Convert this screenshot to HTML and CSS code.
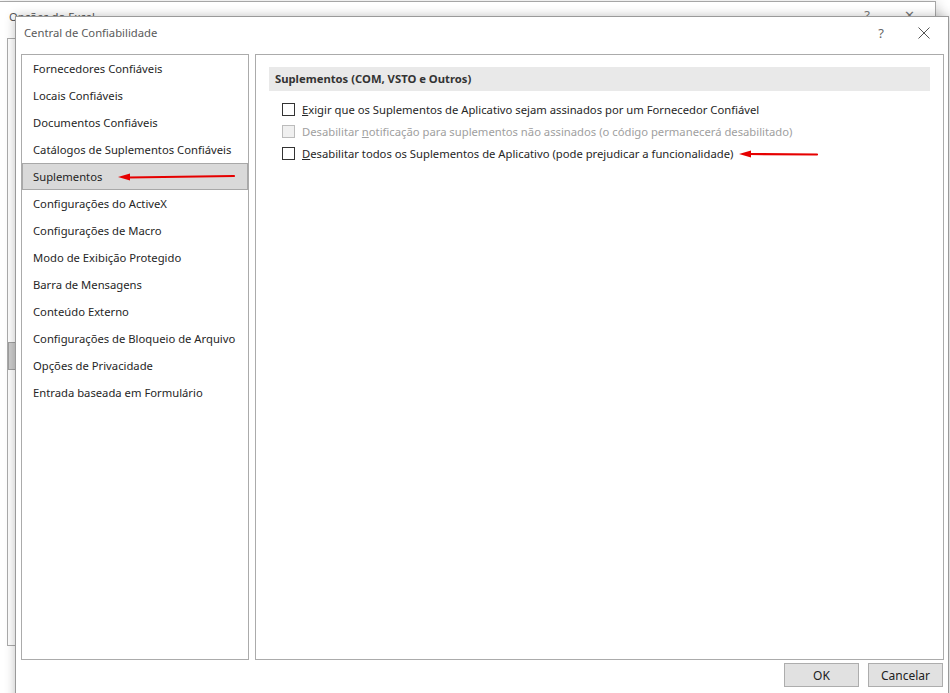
FILE: index.html
```html
<!DOCTYPE html>
<html lang="pt-BR">
<head>
  <meta charset="UTF-8" />
  <title>Central de Confiabilidade</title>
  <link rel="stylesheet" href="styles.css">
</head>
<body>
  <!-- Background window (Opções do Excel) -->
  <div class="bg-window">
    <div class="bg-title">Opções do Excel</div>
    <div class="bg-controls"><span>?</span><span>✕</span></div>
    <div class="bg-list">
      <div class="bg-thumb"></div>
    </div>
  </div>

  <!-- Trust Center dialog -->
  <div class="dialog">
    <div class="titlebar">
      <span class="title">Central de Confiabilidade</span>
      <span class="help">?</span>
      <svg class="close" width="12" height="12" viewBox="0 0 12 12">
        <path d="M0.5 0.5 L11.5 11.5 M11.5 0.5 L0.5 11.5" stroke="#555" stroke-width="1" fill="none"/>
      </svg>
    </div>

    <div class="content">
      <ul class="nav">
        <li>Fornecedores Confiáveis</li>
        <li>Locais Confiáveis</li>
        <li>Documentos Confiáveis</li>
        <li>Catálogos de Suplementos Confiáveis</li>
        <li class="selected">Suplementos</li>
        <li>Configurações do ActiveX</li>
        <li>Configurações de Macro</li>
        <li>Modo de Exibição Protegido</li>
        <li>Barra de Mensagens</li>
        <li>Conteúdo Externo</li>
        <li>Configurações de Bloqueio de Arquivo</li>
        <li>Opções de Privacidade</li>
        <li>Entrada baseada em Formulário</li>
      </ul>

      <div class="pane">
        <div class="section-head">Suplementos (COM, VSTO e Outros)</div>
        <label class="check"><span class="box"></span><span><u>E</u>xigir que os Suplementos de Aplicativo sejam assinados por um Fornecedor Confiável</span></label>
        <label class="check disabled"><span class="box"></span><span>Desabilitar <u>n</u>otificação para suplementos não assinados (o código permanecerá desabilitado)</span></label>
        <label class="check"><span class="box"></span><span><u>D</u>esabilitar todos os Suplementos de Aplicativo (pode prejudicar a funcionalidade)</span></label>
      </div>
    </div>

    <div class="buttons">
      <button class="btn">OK</button>
      <button class="btn">Cancelar</button>
    </div>

    <svg class="grip" width="8" height="8" viewBox="0 0 8 8">
      <rect x="6" y="0" width="1" height="1" fill="#bbb"/>
      <rect x="3" y="3" width="1" height="1" fill="#bbb"/>
      <rect x="6" y="3" width="1" height="1" fill="#bbb"/>
      <rect x="0" y="6" width="1" height="1" fill="#bbb"/>
      <rect x="3" y="6" width="1" height="1" fill="#bbb"/>
      <rect x="6" y="6" width="1" height="1" fill="#bbb"/>
    </svg>
  </div>

  <!-- red annotation arrows -->
  <svg class="arrow arrow-nav" width="120" height="10" viewBox="0 0 120 10">
    <path d="M0 5 L12 1.5 L12 8.5 Z" fill="#e60000"/>
    <path d="M10 5.5 L116 4" stroke="#e60000" stroke-width="2.2" stroke-linecap="round"/>
  </svg>
  <svg class="arrow arrow-opt" width="82" height="10" viewBox="0 0 82 10">
    <path d="M0 5 L12 1.5 L12 8.5 Z" fill="#e60000"/>
    <path d="M10 5 L78 5.5" stroke="#e60000" stroke-width="2.2" stroke-linecap="round"/>
  </svg>
</body>
</html>
```

FILE: styles.css
```css
html, body {
  margin: 0;
  height: 100%;
  overflow: hidden;
}

body {
  position: relative;
  background: #fff;
  font-family: 'Noto Sans', 'Segoe UI', sans-serif;
  font-size: 11.25px;
  color: #262626;
}

/* window behind */
.bg-window {
  position: absolute;
  left: -2px;
  top: 1px;
  width: 936px;
  height: 720px;
  background: #fff;
  border: 1px solid #a6a6a6;
  box-shadow: 2px 2px 12px rgba(0, 0, 0, 0.18);
}

.bg-title {
  position: absolute;
  left: 10px;
  top: 7px;
  color: #555;
}

.bg-controls {
  position: absolute;
  right: 20px;
  top: 4px;
  display: flex;
  gap: 34px;
  color: #777;
  font-size: 13px;
}

.bg-list {
  position: absolute;
  left: 8px;
  top: 36px;
  width: 40px;
  height: 606px;
  border: 1px solid #ababab;
}

.bg-thumb {
  position: absolute;
  left: 0;
  top: 303px;
  width: 7px;
  height: 26px;
  background: #cdcdcd;
  border: 1px solid #a0a0a0;
}

/* dialog */
.dialog {
  position: absolute;
  left: 15px;
  top: 16px;
  width: 932px;
  height: 690px;
  background: #fff;
  border: 1px solid #9a9a9a;
  box-shadow: 0 0 10px rgba(0, 0, 0, 0.25);
  display: flex;
  flex-direction: column;
}

.titlebar {
  height: 37px;
  display: flex;
  align-items: center;
  padding: 0 18px 0 8px;
  color: #5a5a5a;
}

.title {
  flex: 1;
  margin-top: -6px;
}

.help {
  margin-top: -6px;
  margin-right: 34px;
  font-size: 13px;
  color: #666;
}

.close {
  margin-top: -6px;
}

.content {
  display: flex;
  gap: 6px;
  padding: 0 4px 0 5px;
  height: 606px;
}

.nav {
  list-style: none;
  margin: 0;
  padding: 0;
  width: 226px;
  border: 1px solid #ababab;
}

.nav li {
  height: 25px;
  line-height: 25px;
  padding-left: 11px;
  border: 1px solid transparent;
  border-left: none;
  border-right: none;
  white-space: nowrap;
}

.nav li.selected {
  background: #d9d9d9;
  border-color: #a8a8a8;
  border-left: 1px solid #a8a8a8;
  border-right: 1px solid #a8a8a8;
  padding-left: 10px;
  color: #1f1f1f;
}

.pane {
  flex: 1;
  border: 1px solid #ababab;
  padding: 12px 13px 0;
}

.section-head {
  background: #e9e9e9;
  height: 24px;
  line-height: 24px;
  padding-left: 6px;
  font-weight: bold;
  color: #333;
  margin-bottom: 7px;
}

.check {
  display: flex;
  align-items: center;
  gap: 7px;
  height: 22px;
  padding-left: 13px;
  white-space: nowrap;
}

.check .box {
  width: 11px;
  height: 11px;
  border: 1px solid #333;
  background: #fff;
  flex: none;
}

.check.disabled {
  color: #a0a0a0;
}

.check.disabled .box {
  border-color: #bcbcbc;
  background: #f0f0f0;
}

.buttons {
  display: flex;
  justify-content: flex-end;
  gap: 9px;
  padding: 3px 5px 0 0;
}

.btn {
  width: 75px;
  height: 24px;
  background: #e1e1e1;
  border: 1px solid #adadad;
  font-family: inherit;
  font-size: 12px;
  color: #222;
  padding: 0;
}

.grip {
  position: absolute;
  right: 1px;
  bottom: -2px;
}

.arrow {
  position: absolute;
}

.arrow-nav {
  left: 118px;
  top: 172px;
}

.arrow-opt {
  left: 739px;
  top: 149px;
}
```
